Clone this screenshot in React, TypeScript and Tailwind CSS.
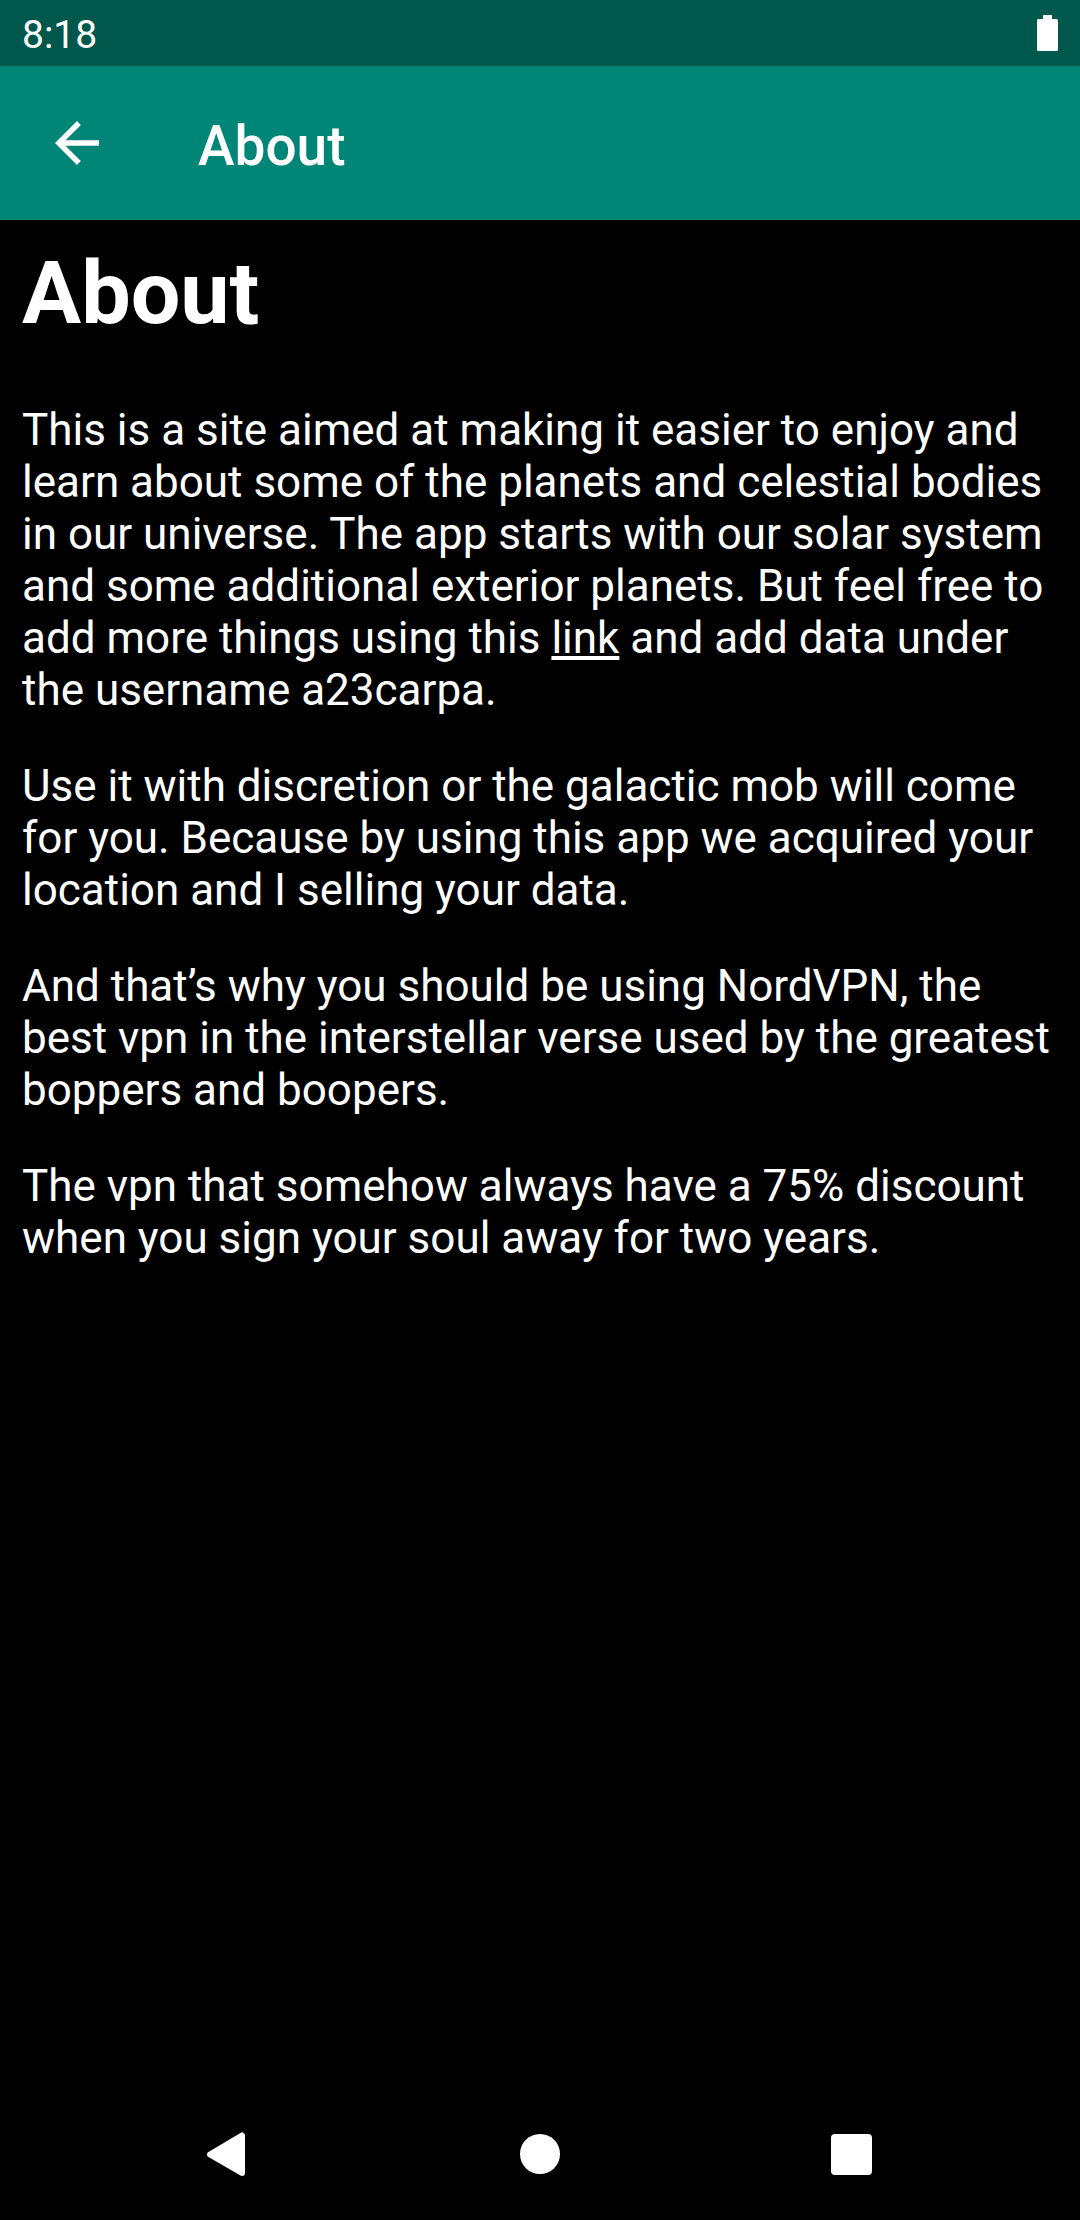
export default function App() {
  return (
    <div className="flex min-h-screen flex-col bg-black font-['Roboto',sans-serif] text-white">
      <div className="flex h-[66px] items-center justify-between bg-[#00574b] px-[22px]">
        <span className="pt-1 text-[39px] leading-10">8:18</span>
        <svg className="h-9 w-[21px]" viewBox="0 0 21 36" fill="white" aria-label="Battery full">
          <path d="M6 0h9v4h4.500a1.500 1.500 0 0 1 1.500 1.500v29a1.500 1.500 0 0 1-1.500 1.500h-18a1.500 1.500 0 0 1-1.500-1.500v-29a1.500 1.500 0 0 1 1.500-1.500H6z" />
        </svg>
      </div>
      <header className="flex h-[154px] items-center bg-[#008577] px-11">
        <button type="button" aria-label="Back" className="mr-[88px] size-[66px]">
          <svg viewBox="0 0 24 24" fill="white" className="size-full">
            <path d="M20 11H7.83l5.59-5.59L12 4l-8 8 8 8 1.41-1.41L7.83 13H20v-2z" />
          </svg>
        </button>
        <span className="pt-1.5 text-[55px] leading-16 font-medium">About</span>
      </header>
      <main className="grow px-[22px] pt-[21px]">
        <h1 className="text-[88px] leading-[104px] font-bold">About</h1>
        <div className="mt-[59px] flex flex-col gap-11 text-[44px] leading-[52px]">
          <p>
            This is a site aimed at making it easier to enjoy and learn about some of the planets and celestial bodies in our universe. The app starts with our solar system and some additional exterior planets. But feel free to add more things using this{' '}
            <a href="#link" className="underline decoration-4 underline-offset-3">link</a> and add data under the username a23carpa.
          </p>
          <p>Use it with discretion or the galactic mob will come for you. Because by using this app we acquired your location and I selling your data.</p>
          <p>And that’s why you should be using NordVPN, the best vpn in the interstellar verse used by the greatest boppers and boopers.</p>
          <p>The vpn that somehow always have a 75% discount when you sign your soul away for two years.</p>
        </div>
      </main>
      <nav className="flex h-[132px] items-center justify-around px-[74px]">
        <button type="button" aria-label="Back">
          <svg className="size-[46px]" viewBox="0 0 46 46" fill="white" stroke="white" strokeWidth="6" strokeLinejoin="round">
            <path d="M36 4.500v37.500L4 23.500z" />
          </svg>
        </button>
        <button type="button" aria-label="Home">
          <svg className="size-[46px]" viewBox="0 0 46 46" fill="white"><circle cx="23" cy="23" r="20" /></svg>
        </button>
        <button type="button" aria-label="Recent apps">
          <svg className="size-[46px]" viewBox="0 0 46 46" fill="white"><rect x="3" y="3" width="41" height="41" rx="4" /></svg>
        </button>
      </nav>
    </div>
  );
}
